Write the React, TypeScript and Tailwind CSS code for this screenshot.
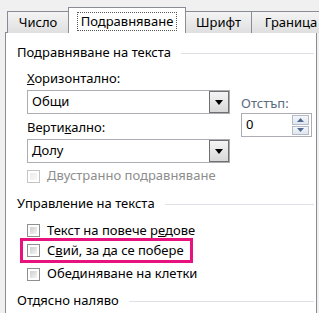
import React from "react";

const font = { fontFamily: '"Noto Sans", "Open Sans", sans-serif' };

function DropButton() {
  return (
    <div className="w-[20px] h-full border border-[#707070] bg-gradient-to-b from-[#f4f4f4] to-[#d9d9d9] flex items-center justify-center">
      <svg width="8" height="5" viewBox="0 0 8 5">
        <path d="M0 0 H8 L4 5 Z" fill="#000" />
      </svg>
    </div>
  );
}

function Select({ value }: { value: string }) {
  return (
    <div className="h-[24px] w-[203px] border border-[#abadb3] bg-white flex items-stretch">
      <span className="flex-1 pl-[4px] flex items-center text-[13px] text-black">{value}</span>
      <DropButton />
    </div>
  );
}

function Checkbox({ disabled }: { disabled?: boolean }) {
  return (
    <div
      className={
        "w-[13px] h-[13px] border p-[2px] bg-white shrink-0 " +
        (disabled ? "border-[#c4c4c4]" : "border-[#8e8f8f]")
      }
    >
      <div
        className={
          "w-full h-full bg-gradient-to-br " +
          (disabled ? "from-[#ececec] to-[#f7f7f7]" : "from-[#cfcfcf] to-[#f4f4f4]")
        }
      />
    </div>
  );
}

function GroupHeading({ children }: { children: React.ReactNode }) {
  return (
    <div className="flex items-center h-[16px] text-[13px] text-black">
      <span className="whitespace-nowrap">{children}</span>
      <div className="flex-1 h-px bg-[#dde1e6] ml-[10px]" />
    </div>
  );
}

export default function App() {
  const inactiveTab =
    "h-[22px] border border-b-0 border-[#898c95] bg-gradient-to-b from-[#f4f4f4] to-[#dfdfdf] flex items-center justify-center text-[13px] text-black shrink-0";

  return (
    <div className="w-[319px] h-[313px] bg-[#f0f0f0] overflow-hidden flex flex-col" style={font}>
      {/* tabs */}
      <div className="h-[33px] -mb-px flex items-end pl-[7px] relative z-10">
        <div className={inactiveTab + " w-[62px]"}>Число</div>
        <div className="h-[26px] w-[118px] -ml-px border border-b-0 border-[#898c95] bg-white flex items-start justify-center pt-[4px] shrink-0">
          <span className="border border-dotted border-[#555] px-[3px] h-[19px] flex items-center text-[13px] text-black">
            Подравняване
          </span>
        </div>
        <div className={inactiveTab + " w-[67px] -ml-px"}>Шрифт</div>
        <div className={inactiveTab + " w-[80px] -ml-px"}>Граница</div>
      </div>

      {/* panel */}
      <div className="ml-[5px] w-[312px] flex-1 bg-white border border-b-0 border-[#898c95] pl-[11px] pr-[2px] pt-[12px] flex flex-col">
        <GroupHeading>Подравняване на текста</GroupHeading>

        <div className="flex mt-[9px] ml-[10px]">
          <div className="flex flex-col w-[203px]">
            <div className="h-[16px] text-[13px] text-black leading-[16px]">
              <u>Х</u>оризонтално:
            </div>
            <div className="mt-[4px]">
              <Select value="Общи" />
            </div>
            <div className="h-[16px] mt-[5px] text-[13px] text-black leading-[16px]">
              Верти<u>к</u>ално:
            </div>
            <div className="mt-[4px]">
              <Select value="Долу" />
            </div>
          </div>
          <div className="flex flex-col ml-[11px] mt-[25px]">
            <div className="h-[16px] text-[13px] text-[#5b6b80] leading-[16px]">Отстъп:</div>
            <div className="mt-[2px] h-[24px] w-[71px] border border-[#abadb3] bg-white flex items-center">
              <span className="flex-1 pl-[4px] text-[13px] text-black">0</span>
              <div className="w-[17px] h-[20px] mr-[2px] flex flex-col gap-px">
                <div className="flex-1 border border-[#b5bcc7] bg-gradient-to-b from-[#f5f7fa] to-[#dfe6ee] flex items-center justify-center">
                  <svg width="7" height="4" viewBox="0 0 7 4">
                    <path d="M0 4 L3.5 0 L7 4 Z" fill="#4f6a92" />
                  </svg>
                </div>
                <div className="flex-1 border border-[#b5bcc7] bg-gradient-to-b from-[#f5f7fa] to-[#dfe6ee] flex items-center justify-center">
                  <svg width="7" height="4" viewBox="0 0 7 4">
                    <path d="M0 0 L7 0 L3.5 4 Z" fill="#4f6a92" />
                  </svg>
                </div>
              </div>
            </div>
          </div>
        </div>

        <div className="flex items-center h-[16px] mt-[5px] ml-[10px] gap-[7px] text-[13px] text-[#8d8d8d]">
          <Checkbox disabled />
          <span>Двустранно подравняване</span>
        </div>

        <div className="mt-[12px]">
          <GroupHeading>Управление на текста</GroupHeading>
        </div>

        <div className="flex items-center h-[15px] mt-[11px] ml-[10px] gap-[7px] text-[13px] text-black">
          <Checkbox />
          <span>
            Текст на повече р<u>е</u>дове
          </span>
        </div>

        <div className="ml-[3px] w-[173px] h-[25px] border-[3px] border-[#e8127f] pl-[4px] flex items-center gap-[7px] text-[13px] text-black">
          <Checkbox />
          <span className="whitespace-nowrap">
            С<u>в</u>ий, за да се побере
          </span>
        </div>

        <div className="flex items-center h-[16px] mt-[3px] ml-[10px] gap-[7px] text-[13px] text-black">
          <Checkbox />
          <span>Обединяване на клетки</span>
        </div>

        <div className="mt-[11px]">
          <GroupHeading>Отдясно наляво</GroupHeading>
        </div>
      </div>
    </div>
  );
}
